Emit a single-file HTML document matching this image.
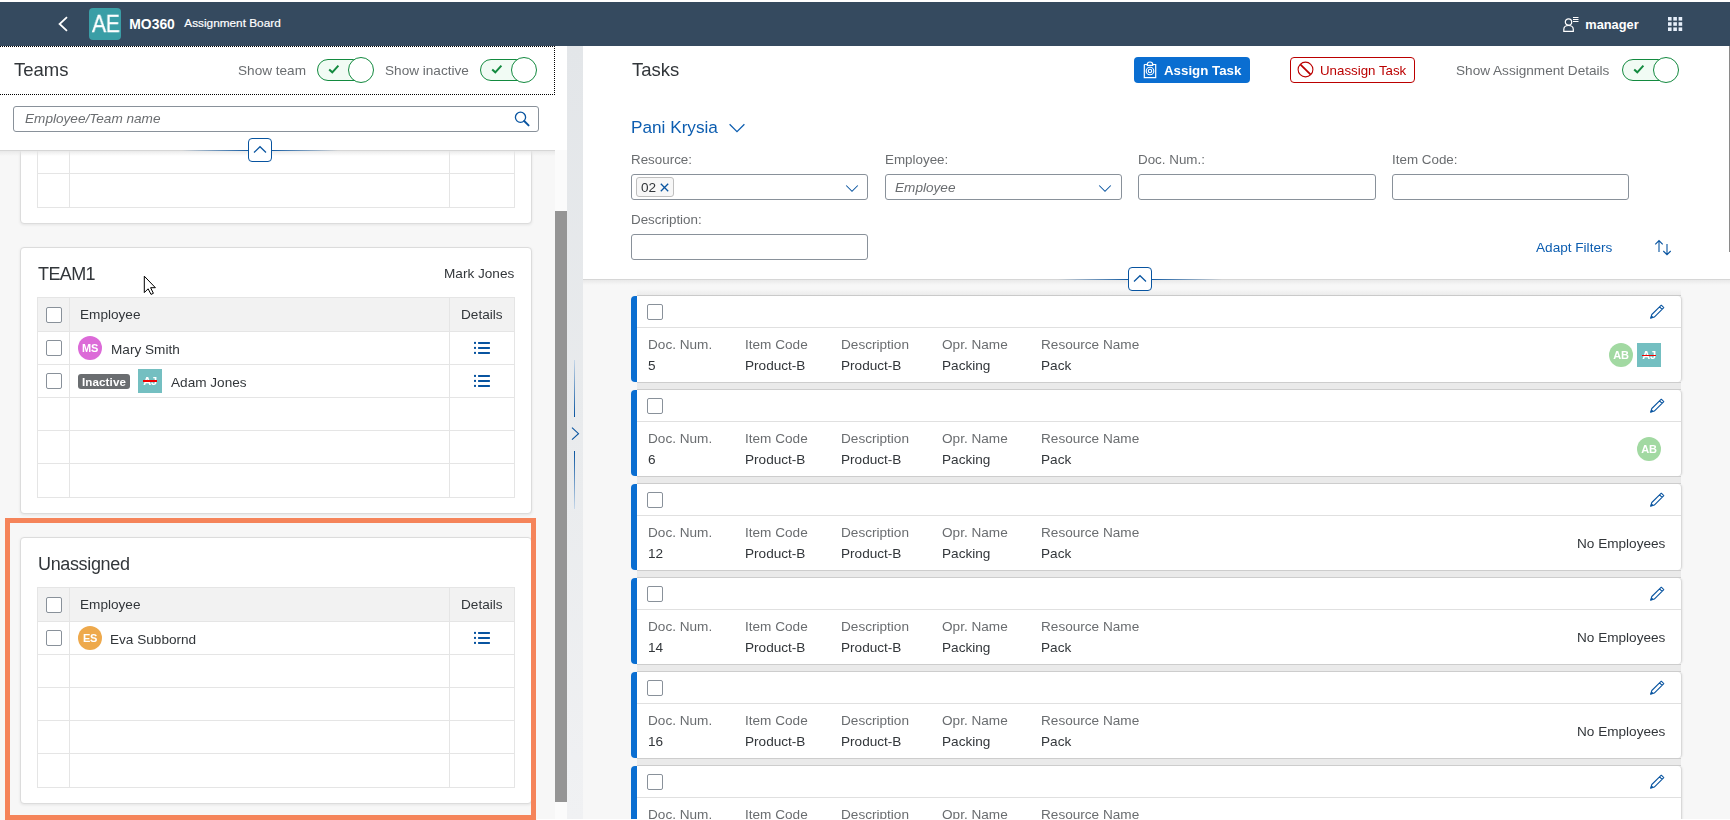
<!DOCTYPE html>
<html><head><meta charset="utf-8">
<style>
*{box-sizing:border-box;margin:0;padding:0}
html,body{width:1730px;height:820px;overflow:hidden;background:#fff;font-family:"Liberation Sans",sans-serif;color:#32363a;position:relative}
.a{position:absolute}
.t{position:absolute;white-space:nowrap;line-height:1;will-change:transform}
.h{will-change:auto}
</style></head><body>
<div class="a" style="left:0px;top:150px;width:555px;height:670px;background:#f7f7f7"></div>
<div class="a" style="left:20px;top:-43px;width:512px;height:267px;background:#fff;border:1px solid #dcdcdc;border-radius:4px;box-shadow:0 1px 3px rgba(0,0,0,0.08)"></div>
<div class="a" style="left:37px;top:7px;width:478px;height:201px;border:1px solid #e5e5e5;background:#fff"></div>
<div class="a" style="left:38px;top:8px;width:476px;height:33px;background:#f2f2f2"></div>
<div class="a" style="left:37px;top:41px;width:478px;height:1px;background:#e5e5e5"></div>
<div class="a" style="left:37px;top:74px;width:478px;height:1px;background:#e5e5e5"></div>
<div class="a" style="left:37px;top:107px;width:478px;height:1px;background:#e5e5e5"></div>
<div class="a" style="left:37px;top:140px;width:478px;height:1px;background:#e5e5e5"></div>
<div class="a" style="left:37px;top:173px;width:478px;height:1px;background:#e5e5e5"></div>
<div class="a" style="left:69px;top:7px;width:1px;height:201px;background:#e5e5e5"></div>
<div class="a" style="left:449px;top:7px;width:1px;height:201px;background:#e5e5e5"></div>
<div class="a" style="left:46px;top:17px;width:16px;height:16px;border:1px solid #89919a;border-radius:2px;background:#fff"></div>
<div class="t" style="left:79.5px;top:18.29px;font-size:13.6px;color:#32363a;font-weight:400;font-style:normal;">Employee</div>
<div class="t" style="left:461.3px;top:18.29px;font-size:13.6px;color:#32363a;font-weight:400;font-style:normal;">Details</div>
<div class="a" style="left:20px;top:247px;width:512px;height:267px;background:#fff;border:1px solid #dcdcdc;border-radius:4px;box-shadow:0 1px 3px rgba(0,0,0,0.08)"></div>
<div class="t" style="left:38px;top:264.76px;font-size:18px;color:#32363a;font-weight:400;font-style:normal;letter-spacing:-0.6px">TEAM1</div>
<div class="t" style="right:1215.4px;top:267.49px;font-size:13.6px;color:#32363a;font-weight:400;font-style:normal;">Mark Jones</div>
<div class="a" style="left:37px;top:297px;width:478px;height:201px;border:1px solid #e5e5e5;background:#fff"></div>
<div class="a" style="left:38px;top:298px;width:476px;height:33px;background:#f2f2f2"></div>
<div class="a" style="left:37px;top:331px;width:478px;height:1px;background:#e5e5e5"></div>
<div class="a" style="left:37px;top:364px;width:478px;height:1px;background:#e5e5e5"></div>
<div class="a" style="left:37px;top:397px;width:478px;height:1px;background:#e5e5e5"></div>
<div class="a" style="left:37px;top:430px;width:478px;height:1px;background:#e5e5e5"></div>
<div class="a" style="left:37px;top:463px;width:478px;height:1px;background:#e5e5e5"></div>
<div class="a" style="left:69px;top:297px;width:1px;height:201px;background:#e5e5e5"></div>
<div class="a" style="left:449px;top:297px;width:1px;height:201px;background:#e5e5e5"></div>
<div class="a" style="left:46px;top:307px;width:16px;height:16px;border:1px solid #89919a;border-radius:2px;background:#fff"></div>
<div class="t" style="left:79.5px;top:308.29px;font-size:13.6px;color:#32363a;font-weight:400;font-style:normal;">Employee</div>
<div class="t" style="left:461.3px;top:308.29px;font-size:13.6px;color:#32363a;font-weight:400;font-style:normal;">Details</div>
<div class="a" style="left:46px;top:340px;width:16px;height:16px;border:1px solid #89919a;border-radius:2px;background:#fff"></div>
<svg class="a" style="left:474px;top:341px" width="17" height="13" viewBox="0 0 17 13"><g fill="#0854a0"><rect x="0" y="0.9" width="2" height="2"/><rect x="0" y="5.9" width="2" height="2"/><rect x="0" y="10.9" width="2" height="2"/><rect x="4" y="0.9" width="12" height="2" rx="0.6"/><rect x="4" y="5.9" width="12" height="2" rx="0.6"/><rect x="4" y="10.9" width="12" height="2" rx="0.6"/></g></svg>
<div class="a" style="left:78px;top:335.5px;width:24px;height:24px;background:#dc6ad8;border-radius:50%"></div>
<div class="t" style="left:78px;top:342.8px;width:24px;text-align:center;font-size:11px;font-weight:700;color:#fff;letter-spacing:-0.3px">MS</div>
<div class="t" style="left:110.7px;top:342.89px;font-size:13.6px;color:#32363a;font-weight:400;font-style:normal;">Mary Smith</div>
<div class="a" style="left:46px;top:373px;width:16px;height:16px;border:1px solid #89919a;border-radius:2px;background:#fff"></div>
<svg class="a" style="left:474px;top:374px" width="17" height="13" viewBox="0 0 17 13"><g fill="#0854a0"><rect x="0" y="0.9" width="2" height="2"/><rect x="0" y="5.9" width="2" height="2"/><rect x="0" y="10.9" width="2" height="2"/><rect x="4" y="0.9" width="12" height="2" rx="0.6"/><rect x="4" y="5.9" width="12" height="2" rx="0.6"/><rect x="4" y="10.9" width="12" height="2" rx="0.6"/></g></svg>
<div class="a" style="left:78px;top:373.5px;width:52px;height:15px;background:#6a6d70;border-radius:3px"></div>
<div class="t" style="left:81.8px;top:375.78px;font-size:11.6px;color:#fff;font-weight:700;font-style:normal;letter-spacing:0.1px">Inactive</div>
<div class="a" style="left:138px;top:368.5px;width:24px;height:24px;background:#74bfc1;border-radius:0"></div>
<div class="t" style="left:138px;top:375.8px;width:24px;text-align:center;font-size:11px;font-weight:700;color:#fff;letter-spacing:-0.3px">AJ</div>
<div class="a" style="left:143.2px;top:380.3px;width:14px;height:1.4px;background:#f00000"></div>
<div class="t" style="left:171px;top:375.89px;font-size:13.6px;color:#32363a;font-weight:400;font-style:normal;">Adam Jones</div>
<div class="a" style="left:20px;top:537px;width:512px;height:267px;background:#fff;border:1px solid #dcdcdc;border-radius:4px;box-shadow:0 1px 3px rgba(0,0,0,0.08)"></div>
<div class="t" style="left:38px;top:554.76px;font-size:18px;color:#32363a;font-weight:400;font-style:normal;letter-spacing:-0.35px">Unassigned</div>
<div class="a" style="left:37px;top:587px;width:478px;height:201px;border:1px solid #e5e5e5;background:#fff"></div>
<div class="a" style="left:38px;top:588px;width:476px;height:33px;background:#f2f2f2"></div>
<div class="a" style="left:37px;top:621px;width:478px;height:1px;background:#e5e5e5"></div>
<div class="a" style="left:37px;top:654px;width:478px;height:1px;background:#e5e5e5"></div>
<div class="a" style="left:37px;top:687px;width:478px;height:1px;background:#e5e5e5"></div>
<div class="a" style="left:37px;top:720px;width:478px;height:1px;background:#e5e5e5"></div>
<div class="a" style="left:37px;top:753px;width:478px;height:1px;background:#e5e5e5"></div>
<div class="a" style="left:69px;top:587px;width:1px;height:201px;background:#e5e5e5"></div>
<div class="a" style="left:449px;top:587px;width:1px;height:201px;background:#e5e5e5"></div>
<div class="a" style="left:46px;top:597px;width:16px;height:16px;border:1px solid #89919a;border-radius:2px;background:#fff"></div>
<div class="t" style="left:79.5px;top:598.29px;font-size:13.6px;color:#32363a;font-weight:400;font-style:normal;">Employee</div>
<div class="t" style="left:461.3px;top:598.29px;font-size:13.6px;color:#32363a;font-weight:400;font-style:normal;">Details</div>
<div class="a" style="left:46px;top:630px;width:16px;height:16px;border:1px solid #89919a;border-radius:2px;background:#fff"></div>
<svg class="a" style="left:474px;top:631px" width="17" height="13" viewBox="0 0 17 13"><g fill="#0854a0"><rect x="0" y="0.9" width="2" height="2"/><rect x="0" y="5.9" width="2" height="2"/><rect x="0" y="10.9" width="2" height="2"/><rect x="4" y="0.9" width="12" height="2" rx="0.6"/><rect x="4" y="5.9" width="12" height="2" rx="0.6"/><rect x="4" y="10.9" width="12" height="2" rx="0.6"/></g></svg>
<div class="a" style="left:78px;top:625.5px;width:24px;height:24px;background:#eea94c;border-radius:50%"></div>
<div class="t" style="left:78px;top:632.8px;width:24px;text-align:center;font-size:11px;font-weight:700;color:#fff;letter-spacing:-0.3px">ES</div>
<div class="t" style="left:110.2px;top:632.89px;font-size:13.6px;color:#32363a;font-weight:400;font-style:normal;">Eva Subbornd</div>
<div class="a" style="left:5px;top:518px;width:531px;height:302px;border:5px solid #f5845a"></div>
<svg class="a" style="left:142.5px;top:274.8px" width="14" height="21" viewBox="0 0 14 21"><path d="M1.3 1.2 V17.6 L5.1 13.8 L8 19.4 L10.4 18.3 L7.6 12.7 L12.4 12.7 Z" fill="#fff" stroke="#000" stroke-width="1" stroke-linejoin="miter"/></svg>
<div class="a" style="left:0px;top:150px;width:555px;height:6px;background:linear-gradient(180deg,#e6e6e6,rgba(247,247,247,0))"></div>
<div class="a" style="left:0px;top:46px;width:555px;height:105px;background:#fff;border-bottom:1px solid #d6d6d6"></div>
<div class="a" style="left:-2px;top:46px;width:557px;height:49px;border:1px dotted #000"></div>
<div class="t" style="left:14px;top:60.94px;font-size:18.5px;color:#32363a;font-weight:400;font-style:normal;">Teams</div>
<div class="t" style="left:237.5px;top:63.69px;font-size:13.6px;color:#6a6d70;font-weight:400;font-style:normal;">Show team</div>
<div class="a" style="left:317px;top:59px;width:48px;height:22px;border:1px solid #138a3f;border-radius:11px;background:#f1fbf4"></div>
<svg class="a" style="left:328px;top:64px" width="12" height="11" viewBox="0 0 12 11"><path d="M1.2 5.4 L4.3 8.3 L10.4 1.6" fill="none" stroke="#138a3f" stroke-width="2"/></svg>
<div class="a" style="left:348px;top:57px;width:26px;height:26px;border:1px solid #138a3f;border-radius:50%;background:#fff"></div>
<div class="t" style="left:384.5px;top:63.69px;font-size:13.6px;color:#6a6d70;font-weight:400;font-style:normal;">Show inactive</div>
<div class="a" style="left:480px;top:59px;width:48px;height:22px;border:1px solid #138a3f;border-radius:11px;background:#f1fbf4"></div>
<svg class="a" style="left:491px;top:64px" width="12" height="11" viewBox="0 0 12 11"><path d="M1.2 5.4 L4.3 8.3 L10.4 1.6" fill="none" stroke="#138a3f" stroke-width="2"/></svg>
<div class="a" style="left:511px;top:57px;width:26px;height:26px;border:1px solid #138a3f;border-radius:50%;background:#fff"></div>
<div class="a" style="left:13px;top:106px;width:526px;height:26px;border:1px solid #89919a;border-radius:3px;background:#fff"></div>
<div class="t" style="left:25px;top:112.49px;font-size:13.6px;color:#6a6d70;font-weight:400;font-style:italic;">Employee/Team name</div>
<svg class="a" style="left:514px;top:111px" width="16" height="16" viewBox="0 0 16 16"><circle cx="6.5" cy="6.3" r="5.1" fill="none" stroke="#0854a0" stroke-width="1.3"/><path d="M10.2 10 L14.6 14.4" stroke="#0854a0" stroke-width="1.9" stroke-linecap="round"/></svg>
<div class="a" style="left:182px;top:150px;width:156px;height:1px;background:linear-gradient(90deg,rgba(8,84,160,0),#0854a0 45%,#0854a0 55%,rgba(8,84,160,0))"></div>
<div class="a" style="left:248px;top:138px;width:24px;height:24px;border:1px solid #0854a0;border-radius:4px;background:#fff"></div>
<svg class="a" style="left:248px;top:138px" width="24" height="24" viewBox="0 0 24 24"><path d="M6 14.5 L12 8.7 L18 14.5" fill="none" stroke="#0854a0" stroke-width="1.2"/></svg>
<div class="a" style="left:555px;top:150px;width:12px;height:670px;background:#fbfbfb"></div>
<div class="a" style="left:555px;top:211px;width:12px;height:591px;background:#959595"></div>
<div class="a" style="left:567px;top:46px;width:16px;height:774px;background:linear-gradient(180deg,#e3e6e9,#e9ebed 50%,#f0f1f3)"></div>
<div class="a" style="left:574px;top:360px;width:1px;height:57px;background:linear-gradient(180deg,rgba(10,110,209,0.15),#0854a0)"></div>
<div class="a" style="left:574px;top:451px;width:1px;height:58px;background:linear-gradient(180deg,#0854a0,rgba(10,110,209,0.15))"></div>
<svg class="a" style="left:569px;top:425px" width="12" height="17" viewBox="0 0 12 17"><path d="M3 2.7 L9.5 8.7 L3 14.7" fill="none" stroke="#0854a0" stroke-width="1.1"/></svg>
<div class="a" style="left:583px;top:279px;width:1147px;height:541px;background:#f7f7f7"></div>
<div class="a" style="left:637px;top:289px;width:1044px;height:7px;background:linear-gradient(180deg,rgba(232,232,232,0),#ececec);border-bottom:1px solid #cdcdcd"></div>
<div class="a" style="left:637px;top:382px;width:1044px;height:8px;background:#eaeaea;border-top:1px solid #d0d0d0;border-bottom:1px solid #d0d0d0"></div>
<div class="a" style="left:631px;top:296px;width:1051px;height:86px;background:#fff;border-right:1px solid #d9d9d9;border-radius:4px;box-shadow:1px 0 2px rgba(0,0,0,0.06)"></div>
<div class="a" style="left:631px;top:296px;width:6px;height:86px;background:#0a6ed1;border-radius:4px 0 0 4px"></div>
<div class="a" style="left:637px;top:327px;width:1044px;height:1px;background:#e0e0e0"></div>
<div class="a" style="left:647px;top:304px;width:16px;height:16px;border:1px solid #89919a;border-radius:2px;background:#fff"></div>
<svg class="a" style="left:1649px;top:304px" width="16" height="16" viewBox="0 0 16 16"><path d="M1.6 14.2 L2.8 10.5 L12.3 1.2 L14.8 3.6 L5.3 13.1 Z M10.6 2.9 L13.1 5.3" fill="none" stroke="#0854a0" stroke-width="1.05" stroke-linejoin="round"/><path d="M1.4 14.4 L2.5 11.2 L4.6 13.3 Z" fill="#0854a0"/></svg>
<div class="t" style="left:647.6px;top:338.29px;font-size:13.6px;color:#6a6d70;font-weight:400;font-style:normal;">Doc. Num.</div>
<div class="t" style="left:647.6px;top:358.89px;font-size:13.6px;color:#32363a;font-weight:400;font-style:normal;">5</div>
<div class="t" style="left:745px;top:338.29px;font-size:13.6px;color:#6a6d70;font-weight:400;font-style:normal;">Item Code</div>
<div class="t" style="left:745px;top:358.89px;font-size:13.6px;color:#32363a;font-weight:400;font-style:normal;">Product-B</div>
<div class="t" style="left:841.3px;top:338.29px;font-size:13.6px;color:#6a6d70;font-weight:400;font-style:normal;">Description</div>
<div class="t" style="left:841.3px;top:358.89px;font-size:13.6px;color:#32363a;font-weight:400;font-style:normal;">Product-B</div>
<div class="t" style="left:942.4px;top:338.29px;font-size:13.6px;color:#6a6d70;font-weight:400;font-style:normal;">Opr. Name</div>
<div class="t" style="left:942.4px;top:358.89px;font-size:13.6px;color:#32363a;font-weight:400;font-style:normal;">Packing</div>
<div class="t" style="left:1041px;top:338.29px;font-size:13.6px;color:#6a6d70;font-weight:400;font-style:normal;">Resource Name</div>
<div class="t" style="left:1041px;top:358.89px;font-size:13.6px;color:#32363a;font-weight:400;font-style:normal;">Pack</div>
<div class="a" style="left:1609px;top:343px;width:24px;height:24px;background:#a2d9a2;border-radius:50%"></div>
<div class="t" style="left:1609px;top:350.3px;width:24px;text-align:center;font-size:11px;font-weight:700;color:#fff;letter-spacing:-0.3px">AB</div>
<div class="a" style="left:1637px;top:343px;width:24px;height:24px;background:#74bfc1;border-radius:0"></div>
<div class="t" style="left:1637px;top:350.3px;width:24px;text-align:center;font-size:11px;font-weight:700;color:#fff;letter-spacing:-0.3px">AJ</div>
<div class="a" style="left:1642.2px;top:354.8px;width:14px;height:1.4px;background:#f00000"></div>
<div class="a" style="left:637px;top:476px;width:1044px;height:8px;background:#eaeaea;border-top:1px solid #d0d0d0;border-bottom:1px solid #d0d0d0"></div>
<div class="a" style="left:631px;top:390px;width:1051px;height:86px;background:#fff;border-right:1px solid #d9d9d9;border-radius:4px;box-shadow:1px 0 2px rgba(0,0,0,0.06)"></div>
<div class="a" style="left:631px;top:390px;width:6px;height:86px;background:#0a6ed1;border-radius:4px 0 0 4px"></div>
<div class="a" style="left:637px;top:421px;width:1044px;height:1px;background:#e0e0e0"></div>
<div class="a" style="left:647px;top:398px;width:16px;height:16px;border:1px solid #89919a;border-radius:2px;background:#fff"></div>
<svg class="a" style="left:1649px;top:398px" width="16" height="16" viewBox="0 0 16 16"><path d="M1.6 14.2 L2.8 10.5 L12.3 1.2 L14.8 3.6 L5.3 13.1 Z M10.6 2.9 L13.1 5.3" fill="none" stroke="#0854a0" stroke-width="1.05" stroke-linejoin="round"/><path d="M1.4 14.4 L2.5 11.2 L4.6 13.3 Z" fill="#0854a0"/></svg>
<div class="t" style="left:647.6px;top:432.29px;font-size:13.6px;color:#6a6d70;font-weight:400;font-style:normal;">Doc. Num.</div>
<div class="t" style="left:647.6px;top:452.89px;font-size:13.6px;color:#32363a;font-weight:400;font-style:normal;">6</div>
<div class="t" style="left:745px;top:432.29px;font-size:13.6px;color:#6a6d70;font-weight:400;font-style:normal;">Item Code</div>
<div class="t" style="left:745px;top:452.89px;font-size:13.6px;color:#32363a;font-weight:400;font-style:normal;">Product-B</div>
<div class="t" style="left:841.3px;top:432.29px;font-size:13.6px;color:#6a6d70;font-weight:400;font-style:normal;">Description</div>
<div class="t" style="left:841.3px;top:452.89px;font-size:13.6px;color:#32363a;font-weight:400;font-style:normal;">Product-B</div>
<div class="t" style="left:942.4px;top:432.29px;font-size:13.6px;color:#6a6d70;font-weight:400;font-style:normal;">Opr. Name</div>
<div class="t" style="left:942.4px;top:452.89px;font-size:13.6px;color:#32363a;font-weight:400;font-style:normal;">Packing</div>
<div class="t" style="left:1041px;top:432.29px;font-size:13.6px;color:#6a6d70;font-weight:400;font-style:normal;">Resource Name</div>
<div class="t" style="left:1041px;top:452.89px;font-size:13.6px;color:#32363a;font-weight:400;font-style:normal;">Pack</div>
<div class="a" style="left:1637px;top:437px;width:24px;height:24px;background:#a2d9a2;border-radius:50%"></div>
<div class="t" style="left:1637px;top:444.3px;width:24px;text-align:center;font-size:11px;font-weight:700;color:#fff;letter-spacing:-0.3px">AB</div>
<div class="a" style="left:637px;top:570px;width:1044px;height:8px;background:#eaeaea;border-top:1px solid #d0d0d0;border-bottom:1px solid #d0d0d0"></div>
<div class="a" style="left:631px;top:484px;width:1051px;height:86px;background:#fff;border-right:1px solid #d9d9d9;border-radius:4px;box-shadow:1px 0 2px rgba(0,0,0,0.06)"></div>
<div class="a" style="left:631px;top:484px;width:6px;height:86px;background:#0a6ed1;border-radius:4px 0 0 4px"></div>
<div class="a" style="left:637px;top:515px;width:1044px;height:1px;background:#e0e0e0"></div>
<div class="a" style="left:647px;top:492px;width:16px;height:16px;border:1px solid #89919a;border-radius:2px;background:#fff"></div>
<svg class="a" style="left:1649px;top:492px" width="16" height="16" viewBox="0 0 16 16"><path d="M1.6 14.2 L2.8 10.5 L12.3 1.2 L14.8 3.6 L5.3 13.1 Z M10.6 2.9 L13.1 5.3" fill="none" stroke="#0854a0" stroke-width="1.05" stroke-linejoin="round"/><path d="M1.4 14.4 L2.5 11.2 L4.6 13.3 Z" fill="#0854a0"/></svg>
<div class="t" style="left:647.6px;top:526.29px;font-size:13.6px;color:#6a6d70;font-weight:400;font-style:normal;">Doc. Num.</div>
<div class="t" style="left:647.6px;top:546.89px;font-size:13.6px;color:#32363a;font-weight:400;font-style:normal;">12</div>
<div class="t" style="left:745px;top:526.29px;font-size:13.6px;color:#6a6d70;font-weight:400;font-style:normal;">Item Code</div>
<div class="t" style="left:745px;top:546.89px;font-size:13.6px;color:#32363a;font-weight:400;font-style:normal;">Product-B</div>
<div class="t" style="left:841.3px;top:526.29px;font-size:13.6px;color:#6a6d70;font-weight:400;font-style:normal;">Description</div>
<div class="t" style="left:841.3px;top:546.89px;font-size:13.6px;color:#32363a;font-weight:400;font-style:normal;">Product-B</div>
<div class="t" style="left:942.4px;top:526.29px;font-size:13.6px;color:#6a6d70;font-weight:400;font-style:normal;">Opr. Name</div>
<div class="t" style="left:942.4px;top:546.89px;font-size:13.6px;color:#32363a;font-weight:400;font-style:normal;">Packing</div>
<div class="t" style="left:1041px;top:526.29px;font-size:13.6px;color:#6a6d70;font-weight:400;font-style:normal;">Resource Name</div>
<div class="t" style="left:1041px;top:546.89px;font-size:13.6px;color:#32363a;font-weight:400;font-style:normal;">Pack</div>
<div class="t" style="right:65px;top:536.79px;font-size:13.6px;color:#32363a;font-weight:400;font-style:normal;">No Employees</div>
<div class="a" style="left:637px;top:664px;width:1044px;height:8px;background:#eaeaea;border-top:1px solid #d0d0d0;border-bottom:1px solid #d0d0d0"></div>
<div class="a" style="left:631px;top:578px;width:1051px;height:86px;background:#fff;border-right:1px solid #d9d9d9;border-radius:4px;box-shadow:1px 0 2px rgba(0,0,0,0.06)"></div>
<div class="a" style="left:631px;top:578px;width:6px;height:86px;background:#0a6ed1;border-radius:4px 0 0 4px"></div>
<div class="a" style="left:637px;top:609px;width:1044px;height:1px;background:#e0e0e0"></div>
<div class="a" style="left:647px;top:586px;width:16px;height:16px;border:1px solid #89919a;border-radius:2px;background:#fff"></div>
<svg class="a" style="left:1649px;top:586px" width="16" height="16" viewBox="0 0 16 16"><path d="M1.6 14.2 L2.8 10.5 L12.3 1.2 L14.8 3.6 L5.3 13.1 Z M10.6 2.9 L13.1 5.3" fill="none" stroke="#0854a0" stroke-width="1.05" stroke-linejoin="round"/><path d="M1.4 14.4 L2.5 11.2 L4.6 13.3 Z" fill="#0854a0"/></svg>
<div class="t" style="left:647.6px;top:620.29px;font-size:13.6px;color:#6a6d70;font-weight:400;font-style:normal;">Doc. Num.</div>
<div class="t" style="left:647.6px;top:640.89px;font-size:13.6px;color:#32363a;font-weight:400;font-style:normal;">14</div>
<div class="t" style="left:745px;top:620.29px;font-size:13.6px;color:#6a6d70;font-weight:400;font-style:normal;">Item Code</div>
<div class="t" style="left:745px;top:640.89px;font-size:13.6px;color:#32363a;font-weight:400;font-style:normal;">Product-B</div>
<div class="t" style="left:841.3px;top:620.29px;font-size:13.6px;color:#6a6d70;font-weight:400;font-style:normal;">Description</div>
<div class="t" style="left:841.3px;top:640.89px;font-size:13.6px;color:#32363a;font-weight:400;font-style:normal;">Product-B</div>
<div class="t" style="left:942.4px;top:620.29px;font-size:13.6px;color:#6a6d70;font-weight:400;font-style:normal;">Opr. Name</div>
<div class="t" style="left:942.4px;top:640.89px;font-size:13.6px;color:#32363a;font-weight:400;font-style:normal;">Packing</div>
<div class="t" style="left:1041px;top:620.29px;font-size:13.6px;color:#6a6d70;font-weight:400;font-style:normal;">Resource Name</div>
<div class="t" style="left:1041px;top:640.89px;font-size:13.6px;color:#32363a;font-weight:400;font-style:normal;">Pack</div>
<div class="t" style="right:65px;top:630.79px;font-size:13.6px;color:#32363a;font-weight:400;font-style:normal;">No Employees</div>
<div class="a" style="left:637px;top:758px;width:1044px;height:8px;background:#eaeaea;border-top:1px solid #d0d0d0;border-bottom:1px solid #d0d0d0"></div>
<div class="a" style="left:631px;top:672px;width:1051px;height:86px;background:#fff;border-right:1px solid #d9d9d9;border-radius:4px;box-shadow:1px 0 2px rgba(0,0,0,0.06)"></div>
<div class="a" style="left:631px;top:672px;width:6px;height:86px;background:#0a6ed1;border-radius:4px 0 0 4px"></div>
<div class="a" style="left:637px;top:703px;width:1044px;height:1px;background:#e0e0e0"></div>
<div class="a" style="left:647px;top:680px;width:16px;height:16px;border:1px solid #89919a;border-radius:2px;background:#fff"></div>
<svg class="a" style="left:1649px;top:680px" width="16" height="16" viewBox="0 0 16 16"><path d="M1.6 14.2 L2.8 10.5 L12.3 1.2 L14.8 3.6 L5.3 13.1 Z M10.6 2.9 L13.1 5.3" fill="none" stroke="#0854a0" stroke-width="1.05" stroke-linejoin="round"/><path d="M1.4 14.4 L2.5 11.2 L4.6 13.3 Z" fill="#0854a0"/></svg>
<div class="t" style="left:647.6px;top:714.29px;font-size:13.6px;color:#6a6d70;font-weight:400;font-style:normal;">Doc. Num.</div>
<div class="t" style="left:647.6px;top:734.89px;font-size:13.6px;color:#32363a;font-weight:400;font-style:normal;">16</div>
<div class="t" style="left:745px;top:714.29px;font-size:13.6px;color:#6a6d70;font-weight:400;font-style:normal;">Item Code</div>
<div class="t" style="left:745px;top:734.89px;font-size:13.6px;color:#32363a;font-weight:400;font-style:normal;">Product-B</div>
<div class="t" style="left:841.3px;top:714.29px;font-size:13.6px;color:#6a6d70;font-weight:400;font-style:normal;">Description</div>
<div class="t" style="left:841.3px;top:734.89px;font-size:13.6px;color:#32363a;font-weight:400;font-style:normal;">Product-B</div>
<div class="t" style="left:942.4px;top:714.29px;font-size:13.6px;color:#6a6d70;font-weight:400;font-style:normal;">Opr. Name</div>
<div class="t" style="left:942.4px;top:734.89px;font-size:13.6px;color:#32363a;font-weight:400;font-style:normal;">Packing</div>
<div class="t" style="left:1041px;top:714.29px;font-size:13.6px;color:#6a6d70;font-weight:400;font-style:normal;">Resource Name</div>
<div class="t" style="left:1041px;top:734.89px;font-size:13.6px;color:#32363a;font-weight:400;font-style:normal;">Pack</div>
<div class="t" style="right:65px;top:724.79px;font-size:13.6px;color:#32363a;font-weight:400;font-style:normal;">No Employees</div>
<div class="a" style="left:637px;top:852px;width:1044px;height:8px;background:#eaeaea;border-top:1px solid #d0d0d0;border-bottom:1px solid #d0d0d0"></div>
<div class="a" style="left:631px;top:766px;width:1051px;height:86px;background:#fff;border-right:1px solid #d9d9d9;border-radius:4px;box-shadow:1px 0 2px rgba(0,0,0,0.06)"></div>
<div class="a" style="left:631px;top:766px;width:6px;height:86px;background:#0a6ed1;border-radius:4px 0 0 4px"></div>
<div class="a" style="left:637px;top:797px;width:1044px;height:1px;background:#e0e0e0"></div>
<div class="a" style="left:647px;top:774px;width:16px;height:16px;border:1px solid #89919a;border-radius:2px;background:#fff"></div>
<svg class="a" style="left:1649px;top:774px" width="16" height="16" viewBox="0 0 16 16"><path d="M1.6 14.2 L2.8 10.5 L12.3 1.2 L14.8 3.6 L5.3 13.1 Z M10.6 2.9 L13.1 5.3" fill="none" stroke="#0854a0" stroke-width="1.05" stroke-linejoin="round"/><path d="M1.4 14.4 L2.5 11.2 L4.6 13.3 Z" fill="#0854a0"/></svg>
<div class="t" style="left:647.6px;top:808.29px;font-size:13.6px;color:#6a6d70;font-weight:400;font-style:normal;">Doc. Num.</div>
<div class="t" style="left:745px;top:808.29px;font-size:13.6px;color:#6a6d70;font-weight:400;font-style:normal;">Item Code</div>
<div class="t" style="left:841.3px;top:808.29px;font-size:13.6px;color:#6a6d70;font-weight:400;font-style:normal;">Description</div>
<div class="t" style="left:942.4px;top:808.29px;font-size:13.6px;color:#6a6d70;font-weight:400;font-style:normal;">Opr. Name</div>
<div class="t" style="left:1041px;top:808.29px;font-size:13.6px;color:#6a6d70;font-weight:400;font-style:normal;">Resource Name</div>
<div class="a" style="left:583px;top:279px;width:1147px;height:6px;background:linear-gradient(180deg,#e6e6e6,rgba(247,247,247,0))"></div>
<div class="a" style="left:583px;top:46px;width:1147px;height:234px;background:#fff;border-bottom:1px solid #d6d6d6"></div>
<div class="t" style="left:632.2px;top:60.94px;font-size:18.5px;color:#32363a;font-weight:400;font-style:normal;">Tasks</div>
<div class="a" style="left:1134px;top:57px;width:116px;height:26px;background:#0a6ed1;border-radius:4px"></div>
<svg class="a" style="left:1143px;top:61px" width="14" height="18" viewBox="0 0 14 18"><path d="M1.3 3.5 H4.3 M9.7 3.5 H12.7 V16.7 H1.3 V3.5" fill="none" stroke="#fff" stroke-width="1.2"/><path d="M4.3 4.4 V3.3 A2.7 2.3 0 0 1 9.7 3.3 V4.4 Z" fill="none" stroke="#fff" stroke-width="1.2"/><circle cx="7" cy="10" r="3.8" fill="none" stroke="#fff" stroke-width="1.1"/><circle cx="7" cy="10" r="1.7" fill="none" stroke="#fff" stroke-width="1.1"/></svg>
<div class="t" style="left:1164.4px;top:63.84px;font-size:13.3px;color:#fff;font-weight:700;font-style:normal;">Assign Task</div>
<div class="a" style="left:1290px;top:57px;width:125px;height:26px;border:1px solid #bb0000;border-radius:4px;background:#fff"></div>
<svg class="a" style="left:1297.3px;top:61.1px" width="17" height="17" viewBox="0 0 17 17"><circle cx="8.5" cy="8.5" r="7.4" fill="none" stroke="#bb0000" stroke-width="1.1"/><path d="M3.3 3.3 L13.7 13.7" stroke="#bb0000" stroke-width="1.8"/></svg>
<div class="t" style="left:1320.4px;top:63.84px;font-size:13.3px;color:#bb0000;font-weight:400;font-style:normal;">Unassign Task</div>
<div class="t" style="left:1456.4px;top:63.69px;font-size:13.6px;color:#6a6d70;font-weight:400;font-style:normal;">Show Assignment Details</div>
<div class="a" style="left:1622.4px;top:59px;width:48px;height:22px;border:1px solid #138a3f;border-radius:11px;background:#f1fbf4"></div>
<svg class="a" style="left:1633.4px;top:64px" width="12" height="11" viewBox="0 0 12 11"><path d="M1.2 5.4 L4.3 8.3 L10.4 1.6" fill="none" stroke="#138a3f" stroke-width="2"/></svg>
<div class="a" style="left:1653.4px;top:57px;width:26px;height:26px;border:1px solid #138a3f;border-radius:50%;background:#fff"></div>
<div class="t" style="left:631px;top:118.84px;font-size:17.2px;color:#0c5db0;font-weight:400;font-style:normal;">Pani Krysia</div>
<svg class="a" style="left:727px;top:121px" width="20" height="14" viewBox="0 0 20 14"><path d="M2.6 3.2 L10 10.6 L17.4 3.2" fill="none" stroke="#0c5db0" stroke-width="1.25"/></svg>
<div class="t" style="left:631px;top:152.86px;font-size:13.4px;color:#6a6d70;font-weight:400;font-style:normal;">Resource:</div>
<div class="a" style="left:631px;top:174px;width:237.3px;height:26px;border:1px solid #89919a;border-radius:3px;background:#fff"></div>
<div class="t" style="left:884.8px;top:152.86px;font-size:13.4px;color:#6a6d70;font-weight:400;font-style:normal;">Employee:</div>
<div class="a" style="left:884.8px;top:174px;width:237.3px;height:26px;border:1px solid #89919a;border-radius:3px;background:#fff"></div>
<div class="t" style="left:1138.4px;top:152.86px;font-size:13.4px;color:#6a6d70;font-weight:400;font-style:normal;">Doc. Num.:</div>
<div class="a" style="left:1138.4px;top:174px;width:237.3px;height:26px;border:1px solid #89919a;border-radius:3px;background:#fff"></div>
<div class="t" style="left:1392px;top:152.86px;font-size:13.4px;color:#6a6d70;font-weight:400;font-style:normal;">Item Code:</div>
<div class="a" style="left:1392px;top:174px;width:237.3px;height:26px;border:1px solid #89919a;border-radius:3px;background:#fff"></div>
<div class="a" style="left:636px;top:177px;width:37.5px;height:19.5px;border:1px solid #bfbfbf;border-radius:3px;background:#f7f7f7"></div>
<div class="t" style="left:641px;top:181.09px;font-size:13.6px;color:#32363a;font-weight:400;font-style:normal;">02</div>
<svg class="a" style="left:659px;top:182px" width="11" height="11" viewBox="0 0 11 11"><path d="M1.8 1.8 L9.2 9.2 M9.2 1.8 L1.8 9.2" stroke="#0854a0" stroke-width="1.3"/></svg>
<svg class="a" style="left:844.5px;top:183.5px" width="14" height="9" viewBox="0 0 14 9"><path d="M1.2 1.5 L7 7.3 L12.8 1.5" fill="none" stroke="#0854a0" stroke-width="1.05"/></svg>
<div class="t" style="left:894.6px;top:180.69px;font-size:13.6px;color:#6a6d70;font-weight:400;font-style:italic;">Employee</div>
<svg class="a" style="left:1098px;top:183.5px" width="14" height="9" viewBox="0 0 14 9"><path d="M1.2 1.5 L7 7.3 L12.8 1.5" fill="none" stroke="#0854a0" stroke-width="1.05"/></svg>
<div class="t" style="left:631px;top:212.96px;font-size:13.4px;color:#6a6d70;font-weight:400;font-style:normal;">Description:</div>
<div class="a" style="left:631px;top:234px;width:237.3px;height:26px;border:1px solid #89919a;border-radius:3px;background:#fff"></div>
<div class="t" style="left:1536px;top:241.09px;font-size:13.6px;color:#0c5db0;font-weight:400;font-style:normal;">Adapt Filters</div>
<svg class="a" style="left:1653px;top:238px" width="20" height="19" viewBox="0 0 20 19"><path d="M6 14 V2.5 M2.3 6.3 L6 2.5 L9.7 6.3" fill="none" stroke="#0854a0" stroke-width="1.1"/><path d="M14 6 V16.5 M10.3 13 L14 16.7 L17.7 13" fill="none" stroke="#0854a0" stroke-width="1.1"/></svg>
<div class="a" style="left:1058px;top:279px;width:164px;height:1px;background:linear-gradient(90deg,rgba(8,84,160,0),#0854a0 45%,#0854a0 55%,rgba(8,84,160,0))"></div>
<div class="a" style="left:1128px;top:267px;width:24px;height:24px;border:1px solid #0854a0;border-radius:4px;background:#fff"></div>
<svg class="a" style="left:1128px;top:267px" width="24" height="24" viewBox="0 0 24 24"><path d="M6 14.5 L12 8.7 L18 14.5" fill="none" stroke="#0854a0" stroke-width="1.2"/></svg>
<div class="a" style="left:1729px;top:46px;width:1px;height:206px;background:#8a8a8a"></div>
<div class="a" style="left:0px;top:0px;width:1730px;height:2px;background:#fff"></div>
<div class="a" style="left:0px;top:2px;width:1730px;height:44px;background:#354a5f"></div>
<svg class="a" style="left:56px;top:15px" width="14" height="18" viewBox="0 0 14 18"><path d="M11 2.2 L3.6 9 L11 15.8" fill="none" stroke="#fff" stroke-width="1.8"/></svg>
<div class="a" style="left:89px;top:8px;width:32px;height:32px;background:#3a9ea6;border-radius:4px"></div>
<div class="t" style="left:91.8px;top:12.18px;font-size:24.6px;color:#fff;font-weight:400;font-style:normal;transform:scaleX(0.86);transform-origin:0 0;letter-spacing:-0.3px;-webkit-text-stroke:0.3px #fff">AE</div>
<div class="t" style="left:129.3px;top:18.03px;font-size:13.9px;color:#fff;font-weight:700;font-style:normal;will-change:auto">MO360</div>
<div class="t" style="left:184.3px;top:18.31px;font-size:11.8px;color:#fff;font-weight:400;font-style:normal;-webkit-text-stroke:0.2px #fff;will-change:auto">Assignment Board</div>
<svg class="a" style="left:1562px;top:16px" width="18" height="17" viewBox="0 0 18 17"><circle cx="6.5" cy="6" r="3.2" fill="none" stroke="#fff" stroke-width="1.2"/><path d="M1.8 15.4 V13.5 C1.8 11 3.8 9.5 6.5 9.5 C9.2 9.5 11.3 11 11.3 13.5 V15.4 Z" fill="none" stroke="#fff" stroke-width="1.2"/><path d="M11 1.5 H16.5 M11 3.5 H16.5 M11 5.5 H16.5" stroke="#fff" stroke-width="1"/></svg>
<div class="t" style="left:1585.3px;top:19.16px;font-size:12.8px;color:#fff;font-weight:700;font-style:normal;will-change:auto">manager</div>
<svg class="a" style="left:1667.5px;top:17px" width="15" height="14" viewBox="0 0 15 14"><g fill="#e8f0fb"><rect x="0" y="0" width="3.6" height="3.6"/><rect x="5.3" y="0" width="3.6" height="3.6"/><rect x="10.6" y="0" width="3.6" height="3.6"/><rect x="0" y="5.2" width="3.6" height="3.6"/><rect x="5.3" y="5.2" width="3.6" height="3.6"/><rect x="10.6" y="5.2" width="3.6" height="3.6"/><rect x="0" y="10.4" width="3.6" height="3.6"/><rect x="5.3" y="10.4" width="3.6" height="3.6"/><rect x="10.6" y="10.4" width="3.6" height="3.6"/></g></svg>
<div class="a" style="left:537px;top:819px;width:1193px;height:1px;background:#fff"></div>
</body></html>
